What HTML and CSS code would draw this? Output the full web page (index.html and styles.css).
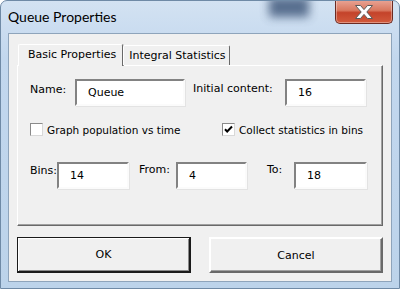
FILE: index.html
```html
<!DOCTYPE html>
<html lang="en">
<head>
    <meta charset="UTF-8">
    <title>Queue Properties</title>
    <link rel="stylesheet" href="styles.css">
</head>
<body>
    <div class="window">
        <div class="glass-blur"></div>
        <div class="titlebar">
            <span class="title">Queue Properties</span>
            <button class="close-btn" type="button" aria-label="Close">
                <svg width="22" height="16" viewBox="0 0 22 16">
                    <path d="M2.5 1.5h5L11 5.6l3.5-4.1h5L13.8 8l5.7 6.5h-5L11 10.4l-3.5 4.1h-5L8.2 8z" fill="#fff" stroke="#5a5a5a" stroke-width="1" stroke-linejoin="round"/>
                </svg>
            </button>
        </div>
        <div class="client">
            <div class="tabs">
                <div class="tab active">Basic Properties</div>
                <div class="tab">Integral Statistics</div>
            </div>
            <div class="panel">
                <div class="row row-top">
                    <label class="lbl lbl-name">Name:</label>
                    <input class="field f-name" type="text" value="Queue">
                    <label class="lbl lbl-init">Initial content:</label>
                    <input class="field f-init" type="text" value="16">
                </div>
                <div class="row row-check">
                    <label class="check c-graph"><span class="box"></span>Graph population vs time</label>
                    <label class="check c-bins"><span class="box checked">
                        <svg width="9" height="9" viewBox="0 0 9 9"><path d="M1 4.2l2.2 2.3L8 1.5" fill="none" stroke="#000" stroke-width="2"/></svg>
                    </span>Collect statistics in bins</label>
                </div>
                <div class="row row-bins">
                    <label class="lbl lbl-bins">Bins:</label>
                    <input class="field f-bins" type="text" value="14">
                    <label class="lbl lbl-from">From:</label>
                    <input class="field f-from" type="text" value="4">
                    <label class="lbl lbl-to">To:</label>
                    <input class="field f-to" type="text" value="18">
                </div>
            </div>
            <div class="buttons">
                <button class="btn btn-default" type="button">OK</button>
                <button class="btn" type="button">Cancel</button>
            </div>
        </div>
    </div>
</body>
</html>
```

FILE: styles.css
```css
body{
  margin: 0;
  background-color: #ffffff;
  font-family: "DejaVu Sans", sans-serif;
}

.window{
  position: relative;
  width: 400px;
  height: 289px;
  box-sizing: border-box;
  border: 1px solid #6f8aa6;
  border-radius: 7px 7px 0 0;
  background: linear-gradient(180deg, #d3e2f2 0%, #c2d7ee 20%, #bcd3ea 100%);
  overflow: hidden;
}

.glass-blur{
  position: absolute;
  left: 268px;
  top: -4px;
  width: 40px;
  height: 20px;
  background-color: #3a5276;
  filter: blur(5px);
  opacity: 0.8;
}

.titlebar{
  position: relative;
  display: flex;
  height: 32px;
}

.title{
  padding: 7px 0 0 7px;
  font-family: Lato, sans-serif;
  font-size: 14px;
  color: #000;
}

.close-btn{
  margin-left: auto;
  margin-right: 6px;
  margin-top: -1px;
  width: 58px;
  height: 24px;
  padding: 0;
  border: 1px solid #6b2a22;
  border-top: none;
  border-radius: 0 0 5px 5px;
  background: linear-gradient(180deg, #e9a596 0%, #d9785f 45%, #c4432a 55%, #d25a3c 100%);
  box-shadow: inset 0 0 0 1px rgba(255,255,255,0.35);
  display: flex;
  align-items: center;
  justify-content: center;
}

.client{
  margin: 0 7px;
  height: 249px;
  box-sizing: border-box;
  border: 1px solid #8ea4bb;
  background-color: #f0f0f0;
  padding: 10px 8px 0 8px;
}

.tabs{
  display: flex;
  align-items: flex-end;
  height: 21px;
  padding-left: 1px;
  position: relative;
  z-index: 1;
}

.tab{
  font-size: 11px;
  color: #000;
  border: 1px solid;
  border-color: #ffffff #696969 #f0f0f0 #ffffff;
  border-bottom: none;
  border-radius: 2px 2px 0 0;
  background-color: #f0f0f0;
  padding: 3px 3px 2px 5px;
  height: 14px;
  line-height: 14px;
  white-space: nowrap;
}

.tab.active{
  height: 18px;
  line-height: 17px;
  padding: 1px 6px 2px 9px;
  margin-bottom: -1px;
  box-shadow: 1px 0 0 #a0a0a0;
}

.panel{
  height: 161px;
  box-sizing: border-box;
  border: 1px solid;
  border-color: #ffffff #696969 #696969 #ffffff;
  box-shadow: inset -1px -1px 0 #a0a0a0;
  padding: 13px 0 0 12px;
}

.row{
  display: flex;
  align-items: flex-start;
}

.lbl{
  font-size: 11px;
  color: #000;
  white-space: nowrap;
}

.field{
  box-sizing: border-box;
  height: 27px;
  border: 2px solid;
  border-color: #828282 #fbfbfb #fbfbfb #828282;
  box-shadow: 1px 1px 0 #e3e3e3;
  background-color: #ffffff;
  font-family: "DejaVu Sans", sans-serif;
  font-size: 11px;
  color: #000;
  padding: 0 0 0 11px;
  outline: none;
}

.lbl-name{ width: 45px; padding-top: 4px; }
.f-name{ width: 110px; }
.lbl-init{ margin-left: 8px; width: 92px; padding-top: 3px; }
.f-init{ width: 81px; }

.row-check{
  margin-top: 17px;
  height: 14px;
}

.check{
  display: flex;
  align-items: center;
  font-size: 10.5px;
  color: #000;
  white-space: nowrap;
}

.box{
  width: 13px;
  height: 13px;
  box-sizing: border-box;
  border: 1px solid;
  border-color: #8a8a8a #d8d8d8 #d8d8d8 #8a8a8a;
  background-color: #fff;
  margin-right: 4px;
  display: flex;
  align-items: center;
  justify-content: center;
}

.c-graph{ width: 192px; }

.row-bins{ margin-top: 25px; }

.lbl-bins{ width: 27px; padding-top: 2px; }
.f-bins{ width: 72px; }
.lbl-from{ margin-left: 10px; width: 37px; padding-top: 1px; }
.f-from{ width: 71px; }
.lbl-to{ margin-left: 20px; width: 27px; padding-top: 1px; }
.f-to{ width: 73px; }

.buttons{
  display: flex;
  gap: 18px;
  margin-top: 11px;
}

.btn{
  width: 174px;
  height: 36px;
  box-sizing: border-box;
  border: 2px solid;
  border-color: #ffffff #696969 #696969 #ffffff;
  box-shadow: inset -1px -1px 0 #a0a0a0;
  background-color: #f0f0f0;
  font-family: "DejaVu Sans", sans-serif;
  font-size: 11px;
  color: #000;
  padding: 0;
}

.btn-default{
  border: 1px solid #1a1a1a;
  border-bottom-width: 2px;
  border-right-width: 2px;
  box-shadow: inset 1px 1px 0 #ffffff, inset -1px -1px 0 #8a8a8a;
}
```
